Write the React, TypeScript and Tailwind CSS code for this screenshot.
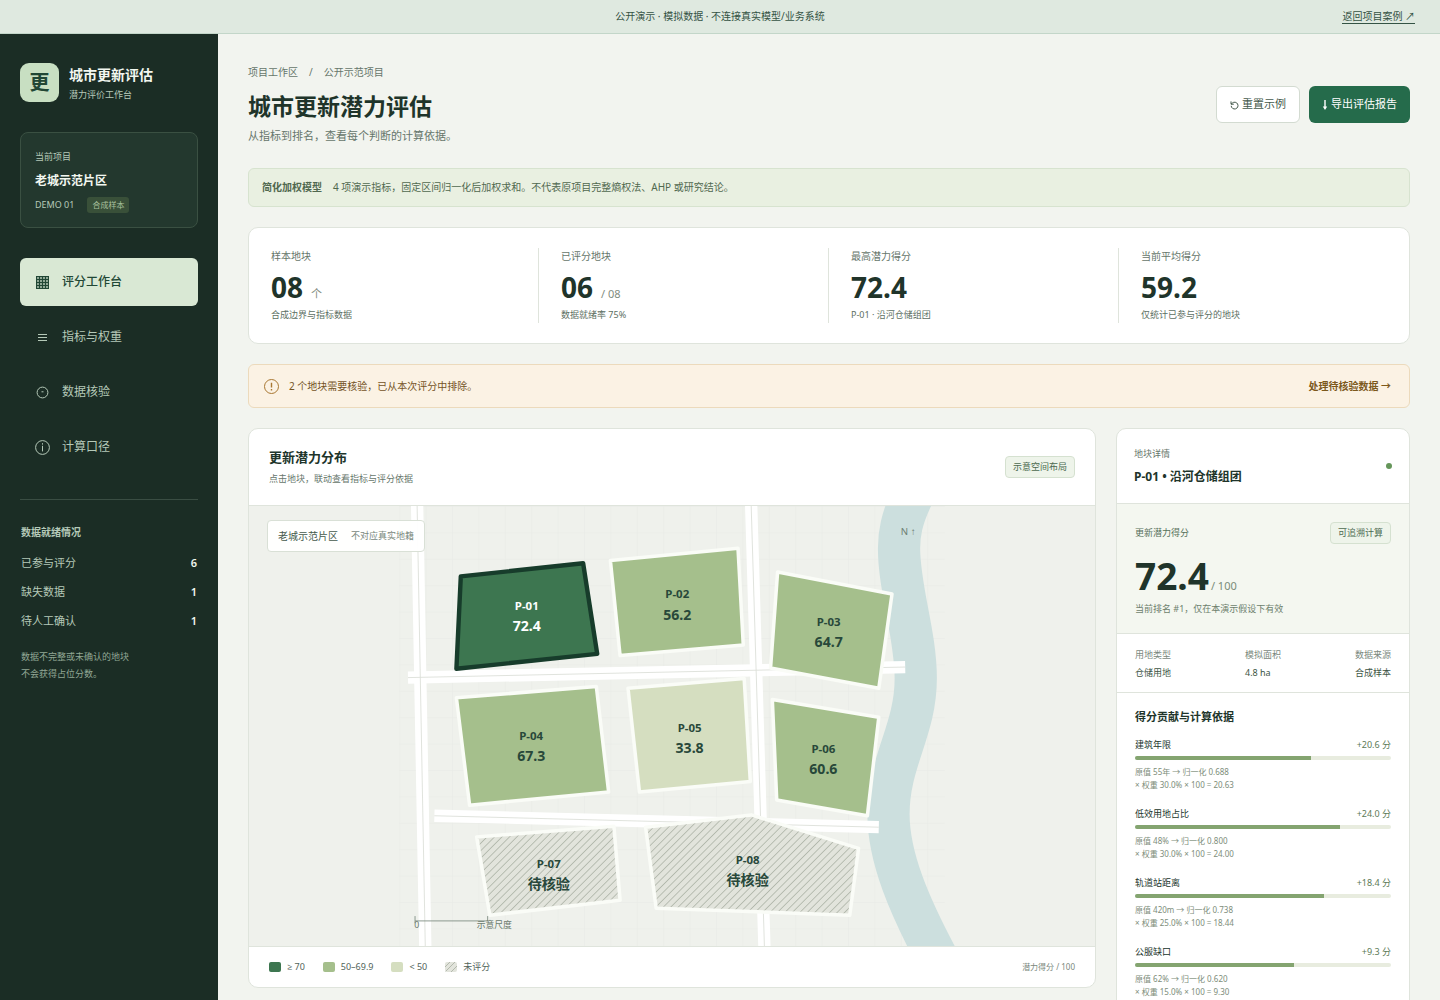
import React from 'react';

const stats = [
  { label: '样本地块', value: '08', unit: '个', note: '合成边界与指标数据' },
  { label: '已评分地块', value: '06', unit: '/ 08', note: '数据就绪率 75%' },
  { label: '最高潜力得分', value: '72.4', unit: '', note: 'P-01 · 沿河仓储组团' },
  { label: '当前平均得分', value: '59.2', unit: '', note: '仅统计已参与评分的地块' },
];

const readiness = [
  { label: '已参与评分', count: 6 },
  { label: '缺失数据', count: 1 },
  { label: '待人工确认', count: 1 },
];

const parcels = [
  { id: 'P-01', score: '72.4', points: '70,80 209,65 225,168 65,185', x: 145, y: 118, fill: '#3d7650' },
  { id: 'P-02', score: '56.2', points: '240,62 385,48 391,158 251,170', x: 316, y: 105, fill: '#a5bf8c' },
  { id: 'P-03', score: '64.7', points: '430,75 560,100 545,207 422,184', x: 488, y: 136, fill: '#a5bf8c' },
  { id: 'P-04', score: '67.3', points: '65,218 224,205 238,325 80,340', x: 150, y: 266, fill: '#a5bf8c' },
  { id: 'P-05', score: '33.8', points: '260,207 392,196 399,313 273,325', x: 330, y: 257, fill: '#d5dec0' },
  { id: 'P-06', score: '60.6', points: '424,220 545,240 532,352 429,334', x: 482, y: 281, fill: '#a5bf8c' },
  { id: 'P-07', score: '待核验', points: '88,376 244,364 251,448 103,465', x: 170, y: 411, fill: 'url(#hatch)' },
  { id: 'P-08', score: '待核验', points: '280,365 400,351 522,389 512,465 292,457', x: 396, y: 407, fill: 'url(#hatch)' },
];

const contributions = [
  { name: '建筑年限', points: '+20.6 分', percent: 68.8, raw: '原值 55年 → 归一化 0.688', formula: '× 权重 30.0% × 100 = 20.63' },
  { name: '低效用地占比', points: '+24.0 分', percent: 80, raw: '原值 48% → 归一化 0.800', formula: '× 权重 30.0% × 100 = 24.00' },
  { name: '轨道站距离', points: '+18.4 分', percent: 73.8, raw: '原值 420m → 归一化 0.738', formula: '× 权重 25.0% × 100 = 18.44' },
  { name: '公服缺口', points: '+9.3 分', percent: 62, raw: '原值 62% → 归一化 0.620', formula: '× 权重 15.0% × 100 = 9.30' },
];

const roads = ['M20 -20L30 520', 'M399.4 -20L415.6 520', 'M10 195L575 183', 'M40 352L545 365'];

const navItems = [
  {
    label: '评分工作台',
    icon: (
      <svg viewBox="0 0 15 15" className="size-[15px]" fill="none" stroke="currentColor">
        <rect x="1.5" y="1.5" width="12" height="12" fill="currentColor" fillOpacity="0.4" />
        <path d="M4.5 1.5v12M7.5 1.5v12M10.5 1.5v12M1.5 4.5h12M1.5 7.5h12M1.5 10.5h12" />
      </svg>
    ),
  },
  {
    label: '指标与权重',
    icon: (
      <svg viewBox="0 0 15 15" className="size-[15px]" fill="none" stroke="currentColor">
        <path d="M3 4.5h9M3 7.5h9M3 10.5h9" />
      </svg>
    ),
  },
  {
    label: '数据核验',
    icon: (
      <svg viewBox="0 0 15 15" className="size-[15px]" fill="none" stroke="currentColor">
        <circle cx="7.5" cy="7.5" r="5.4" />
        <path d="M6.5 6.8h2" />
      </svg>
    ),
  },
  {
    label: '计算口径',
    icon: (
      <svg viewBox="0 0 15 15" className="size-[15px]" fill="none" stroke="currentColor">
        <circle cx="7.5" cy="7.5" r="6.9" />
        <path d="M7.5 3.2v1.4M7.5 5.8v5.6" />
      </svg>
    ),
  },
];

const Sidebar: React.FC = () => (
  <aside className="w-[218px] shrink-0 bg-[#1b2d25] px-5 pt-[29px] pb-8 text-[#b5c9b8]">
    <div className="flex items-center gap-2.5">
      <div className="flex size-[39px] items-center justify-center rounded-[9px] bg-[#c8dfc2] text-[20px] leading-none font-bold text-[#214735]">
        更
      </div>
      <div>
        <p className="text-[14px] leading-6 font-bold text-[#f2f7f0]">城市更新评估</p>
        <p className="mt-px text-[9px] leading-[14px]">潜力评价工作台</p>
      </div>
    </div>

    <div className="mt-[30px] rounded-lg border border-[#3a5042] bg-[#23382e] px-3.5 pt-[15px] pb-3.5">
      <p className="text-[9px] leading-[18px]">当前项目</p>
      <p className="mt-1 text-[12px] leading-[22px] font-bold text-[#f2f7f0]">老城示范片区</p>
      <p className="mt-[5px] flex items-center gap-[13px] text-[9px] leading-4">
        DEMO 01
        <span className="rounded-[3px] bg-[#395039] px-[5px] text-[8px] text-[#a9c29f]">合成样本</span>
      </p>
    </div>

    <nav className="mt-[30px] flex flex-col gap-[7px]">
      {navItems.map((item, i) => (
        <button
          key={item.label}
          className={
            i === 0
              ? 'flex h-12 items-center gap-3 rounded-md bg-[#d9e8d4] px-[15px] text-[12px] font-medium text-[#214735]'
              : 'flex h-12 items-center gap-3 rounded-md px-[15px] text-[12px]'
          }
        >
          {item.icon}
          {item.label}
        </button>
      ))}
    </nav>

    <section className="mt-7 border-t border-[#3a4d43] px-px pt-[23px]">
      <h2 className="text-[10px] leading-[18px] font-bold">数据就绪情况</h2>
      <dl className="mt-[7px] text-[11px] leading-[29px]">
        {readiness.map((row) => (
          <div key={row.label} className="flex justify-between">
            <dt>{row.label}</dt>
            <dd className="font-semibold text-[#f2f7f0]">{row.count}</dd>
          </div>
        ))}
      </dl>
      <p className="mt-[13px] text-[9px] leading-[17px] text-[#92a895]">
        数据不完整或未确认的地块
        <br />
        不会获得占位分数。
      </p>
    </section>
  </aside>
);

const ParcelMap: React.FC = () => (
  <svg viewBox="0 0 620 500" className="block h-[440px] w-full" role="img" aria-label="更新潜力分布">
    <defs>
      <pattern id="grid" width="30" height="30" patternUnits="userSpaceOnUse">
        <path d="M30 0H0V30" fill="none" stroke="#e7eae4" strokeWidth="1" />
      </pattern>
      <pattern id="hatch" width="6" height="6" patternUnits="userSpaceOnUse" patternTransform="rotate(45)">
        <rect width="6" height="6" fill="#e2e4dc" />
        <path d="M0 0V6" stroke="#b3b9ad" strokeWidth="2" />
      </pattern>
    </defs>
    <rect width="620" height="500" fill="url(#grid)" />
    <path
      d="M585 -15C570 15 568 33 568 48C568 95 587 145 587 196C587 255 556 290 556 350C556 400 580 455 612 515"
      fill="none"
      stroke="#ccdfde"
      strokeWidth="48"
    />
    <g fill="none">
      {roads.map((d) => (
        <path key={d} d={d} stroke="#ffffff" strokeWidth="14" />
      ))}
      {roads.map((d) => (
        <path key={d} d={d} stroke="#dcdfd8" strokeWidth="1" />
      ))}
    </g>
    {parcels.map((p, i) => (
      <g key={p.id} fontWeight="700" textAnchor="middle" fill={i === 0 ? '#ffffff' : '#28483a'}>
        <polygon
          points={p.points}
          fill={p.fill}
          stroke={i === 0 ? '#173c2b' : '#fafcf7'}
          strokeWidth={i === 0 ? 5 : 4}
          strokeLinejoin="round"
        />
        <text x={p.x} y={p.y} fontSize="13">{p.id}</text>
        <text x={p.x} y={p.y + 24} fontSize="16">{p.score}</text>
      </g>
    ))}
    <text x="570" y="33" fontSize="11" fill="#6f8175" className="font-['Noto_Sans','Liberation_Sans',sans-serif]">
      N ↑
    </text>
    <path d="M18 466v8M18 471.5h82.5M100.5 466v6" fill="none" stroke="#7e8d82" />
    <g fontSize="10" fill="#6b7b6f">
      <text x="17" y="480">0</text>
      <text x="88" y="480">示意尺度</text>
    </g>
  </svg>
);

const HatchSwatch: React.FC = () => (
  <svg viewBox="0 0 12 10" className="h-2.5 w-3 rounded-xs bg-[#e2e4dc]" fill="none" stroke="#b3b9ad">
    <path d="M-1 6L6 -1M-1 11L11 -1M5 11L13 3" />
  </svg>
);

const MapCard: React.FC = () => (
  <section className="overflow-hidden rounded-[10px] border border-[#dfe4dc] bg-white">
    <header className="flex items-center justify-between border-b border-[#dfe4dc] px-5 py-[18px]">
      <div>
        <h2 className="text-[13px] leading-5 font-bold">更新潜力分布</h2>
        <p className="mt-1 text-[9px] leading-4 text-[#66766b]">点击地块，联动查看指标与评分依据</p>
      </div>
      <span className="rounded-sm border border-[#d5e1d0] bg-[#eef4ea] px-[7px] text-[9px] leading-5 text-[#4c6a50]">
        示意空间布局
      </span>
    </header>
    <div className="relative bg-[#eff1ec]">
      <ParcelMap />
      <p className="absolute top-3.5 left-[18px] flex items-center gap-[13px] rounded-sm border border-[#d9e0d6] bg-white/95 px-2.5 text-[10px] leading-[30px] text-[#45594c]">
        老城示范片区
        <span className="text-[9px] text-[#7a887d]">不对应真实地籍</span>
      </p>
    </div>
    <footer className="flex h-[41px] items-center justify-between border-t border-[#dfe4dc] px-5 text-[9px] text-[#52645a]">
      <ul className="flex gap-[18px]">
        <li className="flex items-center gap-1.5">
          <span className="h-2.5 w-3 rounded-xs bg-[#3d7650]" />≥ 70
        </li>
        <li className="flex items-center gap-1.5">
          <span className="h-2.5 w-3 rounded-xs bg-[#a5bf8c]" />50–69.9
        </li>
        <li className="flex items-center gap-1.5">
          <span className="h-2.5 w-3 rounded-xs bg-[#d5dec0]" />&lt; 50
        </li>
        <li className="flex items-center gap-1.5">
          <HatchSwatch />
          未评分
        </li>
      </ul>
      <span className="text-[8px] text-[#7a887d]">潜力得分 / 100</span>
    </footer>
  </section>
);

const DetailCard: React.FC = () => (
  <aside className="overflow-hidden rounded-[10px] border border-[#dfe4dc] bg-white text-[9px]">
    <header className="flex items-center justify-between border-b border-[#dfe4dc] p-[17px]">
      <div>
        <p className="leading-4 text-[#66766b]">地块详情</p>
        <h2 className="mt-1.5 text-[12px] leading-[18px] font-bold">P-01 • 沿河仓储组团</h2>
      </div>
      <span className="size-1.5 rounded-full bg-[#65965a]" />
    </header>

    <div className="border-b border-[#dfe4dc] bg-[#f4f7f0] px-[18px] pt-[18px] pb-4">
      <div className="flex items-center justify-between">
        <span className="text-[#54705a]">更新潜力得分</span>
        <span className="rounded-sm border border-[#d5e1d0] bg-[#eef4ea] px-[7px] leading-5 text-[#4c6a50]">
          可追溯计算
        </span>
      </div>
      <p className="mt-2.5 flex items-baseline gap-0.5">
        <strong className="text-[37px] leading-[44px]">72.4</strong>
        <span className="text-[11px] leading-4 text-[#7a8c78]">/ 100</span>
      </p>
      <p className="mt-[3px] leading-4 text-[#6d7f6d]">当前排名 #1，仅在本演示假设下有效</p>
    </div>

    <dl className="flex justify-between border-b border-[#dfe4dc] px-[18px] pt-3 pb-2.5 leading-[18px]">
      <div>
        <dt className="text-[#7a887d]">用地类型</dt>
        <dd className="text-[#3d5545]">仓储用地</dd>
      </div>
      <div className="w-9">
        <dt className="text-[#7a887d]">模拟面积</dt>
        <dd className="text-[#3d5545]">4.8 ha</dd>
      </div>
      <div>
        <dt className="text-[#7a887d]">数据来源</dt>
        <dd className="text-[#3d5545]">合成样本</dd>
      </div>
    </dl>

    <div className="px-[18px] pt-[15px] pb-5">
      <h3 className="text-[11px] leading-[18px] font-bold">得分贡献与计算依据</h3>
      <ul className="mt-[11px] flex flex-col gap-3.5">
        {contributions.map((item) => (
          <li key={item.name}>
            <div className="flex justify-between leading-4">
              <span>{item.name}</span>
              <span className="text-[#5c7a56]">{item.points}</span>
            </div>
            <div className="mt-[3px] h-1 overflow-hidden rounded-xs bg-[#e8ecdf]">
              <div className="h-full bg-[#84a470]" style={{ width: `${item.percent}%` }} />
            </div>
            <p className="mt-[5px] mb-px text-[8px] leading-[13px] text-[#7d8d7a]">
              {item.raw}
              <br />
              {item.formula}
            </p>
          </li>
        ))}
      </ul>
    </div>
  </aside>
);

const App: React.FC = () => (
  <div className="flex min-h-screen flex-col bg-[#f2f4ef] font-['Noto_Sans','Open_Sans','Noto_Sans_CJK_SC',sans-serif] text-[#20342a]">
    <div className="grid h-[34px] grid-cols-[1fr_auto_1fr] items-center border-b border-[#c3d6c9] bg-[#dfe9e0] px-[25px] text-[10px] text-[#345344]">
      <p className="col-start-2">公开演示 · 模拟数据 · 不连接真实模型/业务系统</p>
      <a href="#case" className="justify-self-end border-b border-[#345344] leading-[14px]">
        返回项目案例 ↗
      </a>
    </div>

    <div className="flex grow">
      <Sidebar />

      <main className="min-w-0 grow px-[30px] pt-[30px] pb-8">
        <header className="flex items-center justify-between">
          <div>
            <p className="flex gap-[11px] text-[10px] leading-4 text-[#66766b]">
              <span>项目工作区</span>
              <span>/</span>
              <span>公开示范项目</span>
            </p>
            <h1 className="mt-2 text-[23px] leading-9 font-bold">城市更新潜力评估</h1>
            <p className="mt-[3px] text-[11px] leading-[18px] text-[#66766b]">从指标到排名，查看每个判断的计算依据。</p>
          </div>
          <div className="flex gap-[9px]">
            <button className="flex h-[37px] items-center gap-[3px] rounded-md border border-[#d3dbd1] bg-white px-[13px] text-[11px] text-[#45594c]">
              <svg viewBox="0 0 9 10" className="h-2.5 w-[9px]" fill="none" stroke="currentColor">
                <path d="M1.2 5.8A3.4 3.4 0 1 0 2.4 3L1 4.2M1 1.4v2.8h2.8" />
              </svg>
              重置示例
            </button>
            <button className="flex h-[37px] items-center gap-[3px] rounded-md bg-[#256b4b] px-[13px] text-[11px] text-white">
              <svg viewBox="0 0 6 10" className="h-2.5 w-1.5" fill="currentColor">
                <path d="M2.3 0h1.4v6.5h1.5L3 10 .8 6.5h1.5z" />
              </svg>
              导出评估报告
            </button>
          </div>
        </header>

        <p className="mt-[23px] flex h-[39px] items-center gap-[11px] rounded-md border border-[#d7e3cf] bg-[#e9f0e1] px-[13px] text-[10px] text-[#50684f]">
          <strong>简化加权模型</strong>
          4 项演示指标，固定区间归一化后加权求和。不代表原项目完整熵权法、AHP 或研究结论。
        </p>

        <section className="mt-5 grid grid-cols-4 rounded-[10px] border border-[#dfe4dc] bg-white py-5">
          {stats.map((s) => (
            <div key={s.label} className="border-r border-[#dfe4dc] px-[22px] last:border-r-0">
              <p className="text-[10px] leading-4 text-[#66766b]">{s.label}</p>
              <p className="mt-[5px] flex items-baseline gap-2">
                <strong className="text-[28px] leading-9">{s.value}</strong>
                <span className="text-[11px] leading-4 text-[#7f8c80]">{s.unit}</span>
              </p>
              <p className="mt-0.5 text-[9px] leading-4 text-[#5d6f63]">{s.note}</p>
            </div>
          ))}
        </section>

        <div className="mt-5 flex h-11 items-center rounded-md border border-[#ecdabc] bg-[#fbf2e4] pr-[18px] pl-[15px] text-[10px] text-[#74531f]">
          <svg viewBox="0 0 15 15" className="mr-2.5 size-[15px]" fill="none" stroke="#a87732">
            <circle cx="7.5" cy="7.5" r="7" />
            <path d="M7.5 3.8v4.8M7.5 10v1.4" strokeWidth="1.4" />
          </svg>
          <p>2 个地块需要核验，已从本次评分中排除。</p>
          <button className="ml-auto font-bold text-[#7c591c]">处理待核验数据 →</button>
        </div>

        <div className="mt-5 grid grid-cols-[1fr_294px] items-start gap-5">
          <MapCard />
          <DetailCard />
        </div>
      </main>
    </div>
  </div>
);

export default App;
